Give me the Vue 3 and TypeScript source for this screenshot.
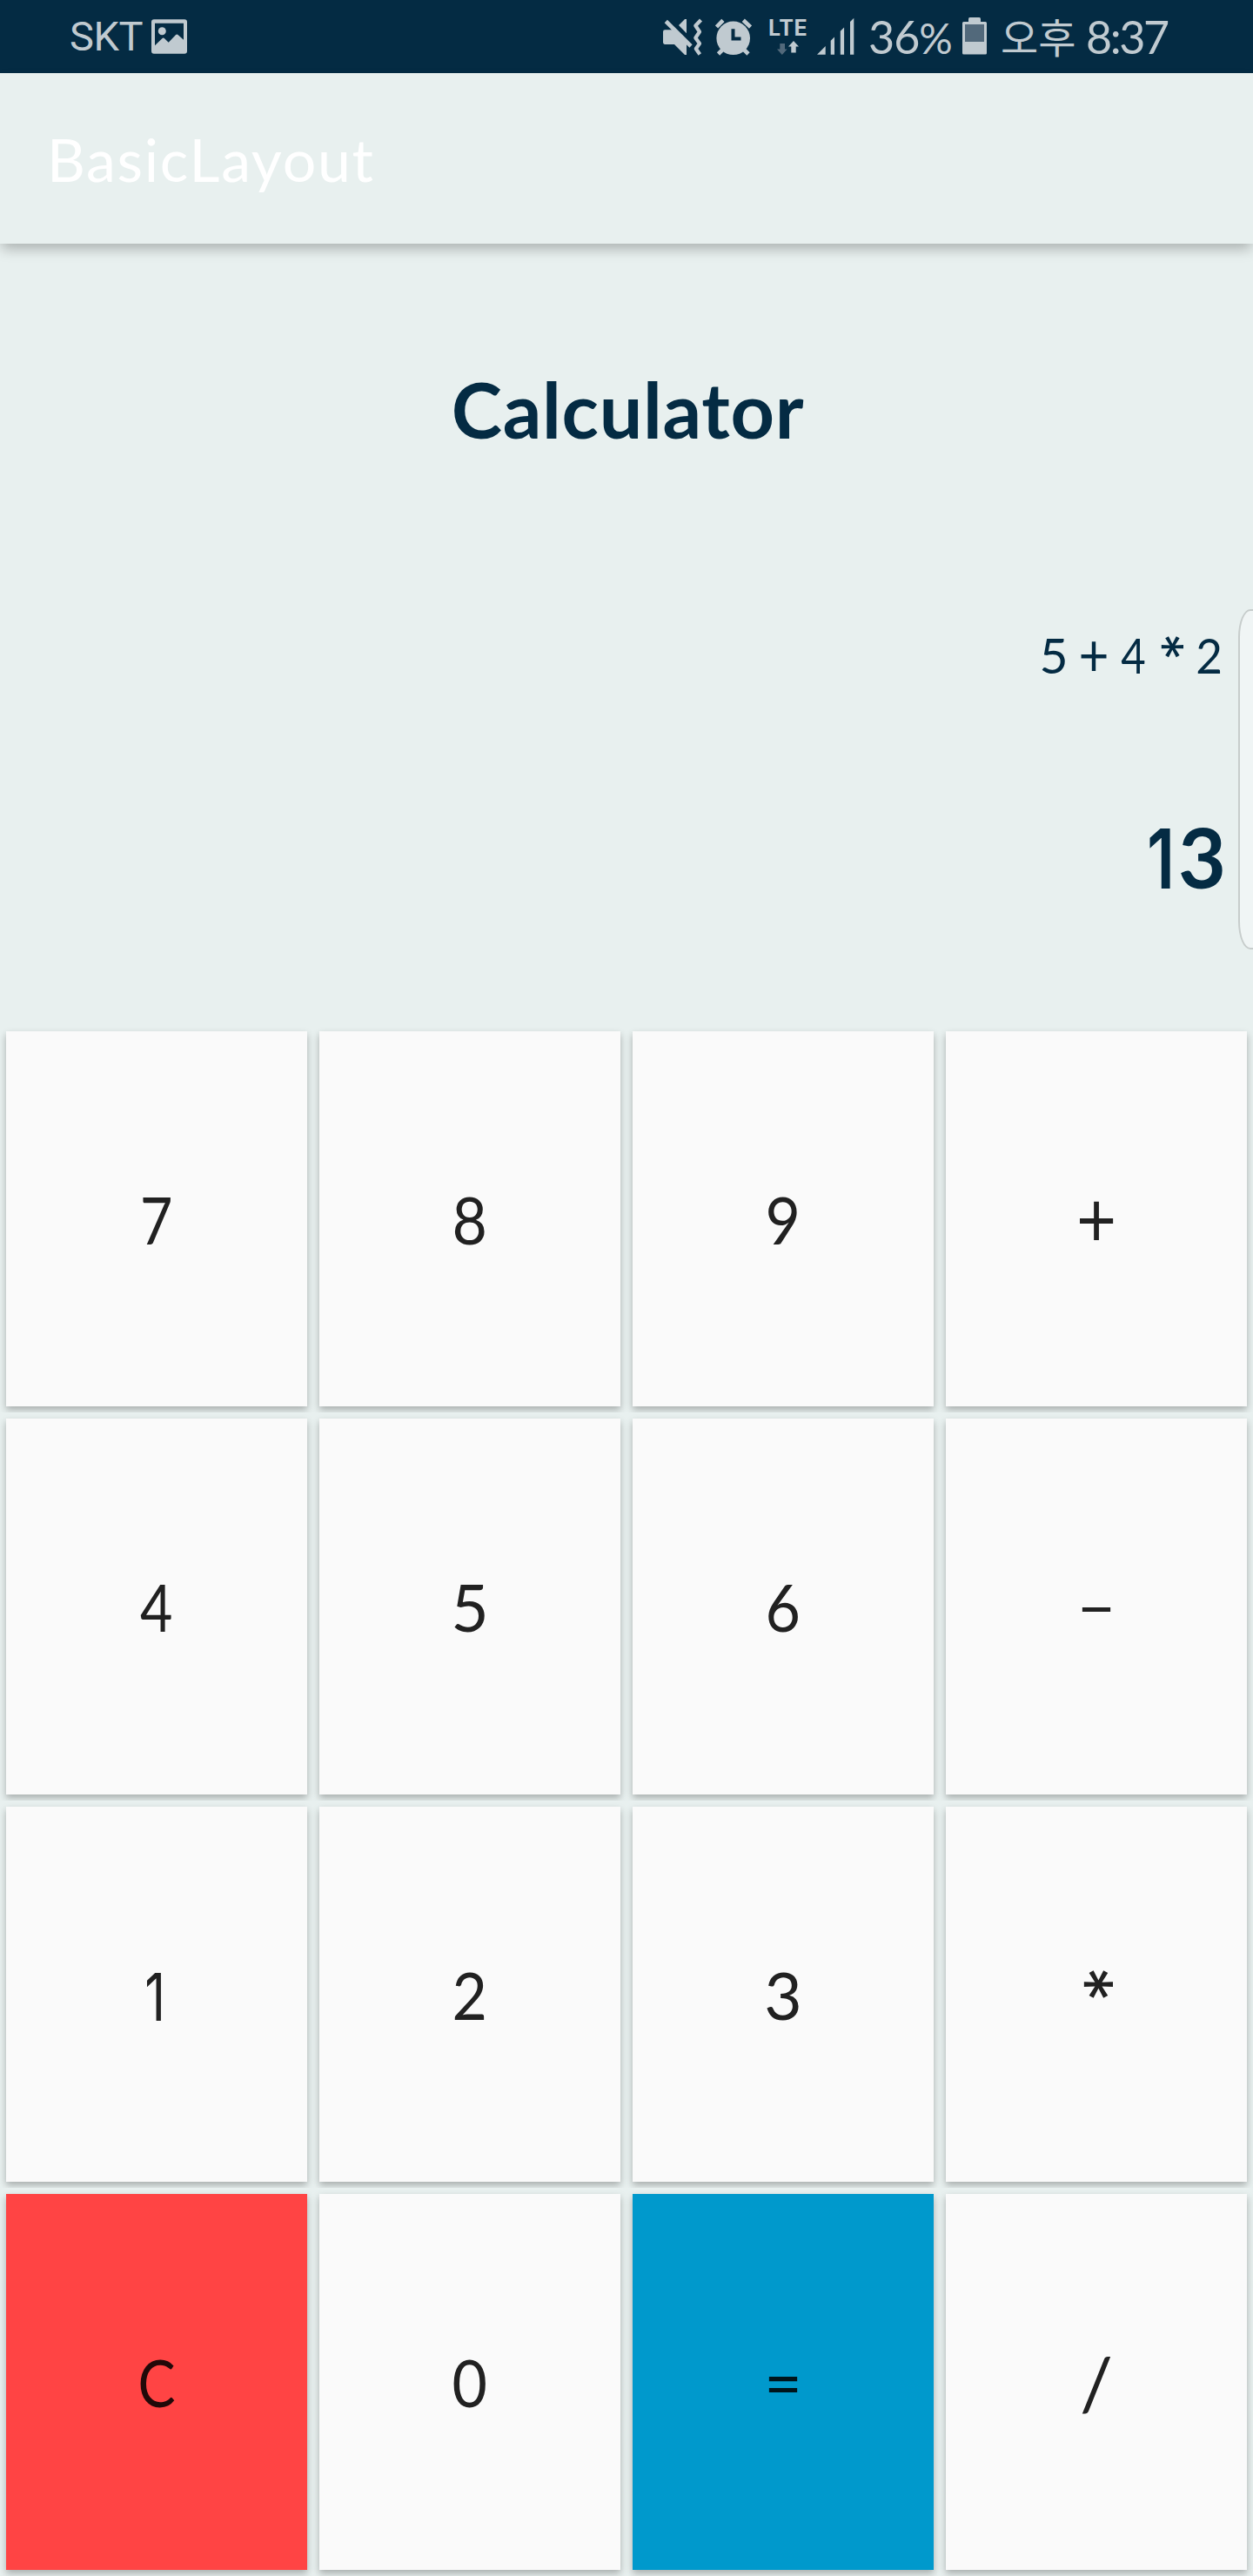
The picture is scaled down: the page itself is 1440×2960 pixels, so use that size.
<script setup lang="ts">
interface Key {
  label: string
  shape?: 'narrow' | 'slim' | 'one' | 'plus' | 'star' | 'slash'
  tone?: 'clear' | 'equals'
}

const rows: Key[][] = [
  [{ label: '7', shape: 'narrow' }, { label: '8', shape: 'slim' }, { label: '9', shape: 'slim' }, { label: '+', shape: 'plus' }],
  [{ label: '4', shape: 'narrow' }, { label: '5' }, { label: '6', shape: 'slim' }, { label: '−' }],
  [{ label: '1', shape: 'one' }, { label: '2', shape: 'slim' }, { label: '3' }, { label: '*', shape: 'star' }],
  [{ label: 'C', shape: 'narrow', tone: 'clear' }, { label: '0', shape: 'slim' }, { label: '=', tone: 'equals' }, { label: '/', shape: 'slash' }],
]

const expression: Key[] = [
  { label: '5' },
  { label: '+', shape: 'plus' },
  { label: '4', shape: 'narrow' },
  { label: '*', shape: 'star' },
  { label: '2', shape: 'slim' },
]
</script>

<template>
  <div class="screen">
    <header class="status">
      <span class="carrier">SKT</span>
      <svg class="picture" width="41" height="84" viewBox="174 0 41 84">
        <path fill-rule="evenodd" d="M177 22.3H212a3 3 0 0 1 3 3V58.7a3 3 0 0 1-3 3H177a3 3 0 0 1-3-3V25.3a3 3 0 0 1 3-3ZM178 26.7V52.3L186.3 44.2Q187.7 43 189.1 44.2L193.7 48.7L201.8 40.2Q203.3 38.8 204.8 40.2L211 45.7V26.7Z" />
        <circle cx="186.3" cy="35.7" r="4.5" />
      </svg>

      <div class="tray">
        <svg class="mute" width="46" height="84" viewBox="762 0 46 84">
          <path d="M789 22V38.2L780 29L787 22ZM762 36.5Q762 34.3 764.2 34.3H774L789 49V63H787L775 51H764.2Q762 51 762 48.8Z" />
          <path class="line" stroke-width="4.6" d="M765.3 24.5L794 53" />
          <path class="line" stroke-width="4.2" stroke-linejoin="round" d="M805.5 23L799.3 29.5L804 36.5L799.3 43.5L804 50L799.8 56L804.3 62.5" />
        </svg>
        <svg class="alarm" width="42" height="84" viewBox="821.5 0 42 84">
          <circle cx="842.2" cy="43.8" r="19.3" />
          <path class="line" stroke-width="4.6" d="M823 31L830.4 23.3M853.8 23.3L862 31M825 62L830.5 56.5M854 56.5L859.5 62" />
          <path class="hand" d="M842 33.3V44.4H851" />
        </svg>
        <div class="network">
          <span class="lte">LTE</span>
          <svg class="arrows" width="43" height="17" viewBox="884 47 43 17">
            <path class="idle" d="M896.3 50H902V56.5H904.6L898.8 63L893 56.5H896.3Z" />
            <path d="M912 47L918 53.5H914.7V60.4H909.3V53.5H906Z" />
          </svg>
        </div>
        <svg class="signal" width="43" height="84" viewBox="939 0 43 84">
          <path d="M939 62.7L948.7 53V62.7ZM954.7 62.7V46.8L959 42.6V62.7ZM965.8 62.7V35.7L970.1 31.5V62.7ZM977 62.7V24.9L981.3 20.7V62.7Z" />
        </svg>
        <span class="percent">36<small>%</small></span>
        <svg class="battery" width="28" height="84" viewBox="1106 0 28 84">
          <path d="M1114.5 20H1125.5Q1127 20 1127 22V25H1132.5Q1134 25 1134 26.5V61Q1134 62.5 1132.5 62.5H1107.5Q1106 62.5 1106 61V26.5Q1106 25 1107.5 25H1113V22Q1113 20 1114.5 20Z" />
          <path class="idle" d="M1109 28H1131V48H1109Z" />
        </svg>
        <span class="meridiem">오후</span>
        <span class="clock">8:37</span>
      </div>
    </header>

    <div class="appbar"><span>BasicLayout</span></div>

    <main class="display">
      <h1>Calculator</h1>
      <div class="expression">
        <span v-for="(part, i) in expression" :key="i" class="part" :class="part.shape"><b>{{ part.label }}</b></span>
      </div>
      <div class="result"><span class="lead">1</span>3</div>
      <div class="edge"></div>
    </main>

    <section class="pad">
      <div v-for="(row, r) in rows" :key="r" class="row">
        <button v-for="key in row" :key="key.label" type="button" :class="[key.tone, key.shape]">
          <b>{{ key.label }}</b>
        </button>
      </div>
    </section>
  </div>
</template>

<style>
body {
  margin: 0;
  background: #e8f0ef;
}
</style>

<style scoped>
.screen {
  display: flex;
  flex-direction: column;
  width: 1440px;
  height: 2960px;
  overflow: hidden;
  background: #e8f0ef;
  color: #042b43;
  font-family: Lato, "Noto Sans CJK KR", sans-serif;
}

svg {
  display: block;
  flex: none;
  fill: #c0cad0;
}

.status {
  display: flex;
  flex: none;
  height: 84px;
  padding-left: 80px;
  background: #042b43;
  color: #c0cad0;
  line-height: 84px;
  white-space: nowrap;
}

.carrier {
  width: 94px;
  font-family: Roboto, sans-serif;
  font-size: 47px;
  letter-spacing: -0.4px;
}

.tray {
  display: flex;
  margin-left: 547px;
}

.line {
  fill: none;
  stroke: #c0cad0;
}

.hand {
  fill: none;
  stroke: #042b43;
  stroke-width: 4;
}

.idle {
  fill: #52697b;
}

.alarm {
  margin-left: 13.5px;
}

.network {
  display: flex;
  flex-direction: column;
  width: 43px;
  margin-left: 20.5px;
  padding-top: 20px;
}

.lte {
  height: 27px;
  margin-left: -1px;
  font: 700 25px/25px Inter, sans-serif;
  letter-spacing: 0.5px;
}

.signal {
  margin-left: 12px;
}

.percent {
  width: 108px;
  margin-left: 16px;
  font-size: 52px;
  letter-spacing: -1px;
}

.percent small {
  font-size: 48px;
}

.meridiem {
  width: 98px;
  margin-left: 16px;
  font-family: "Noto Sans CJK KR", sans-serif;
  font-size: 47px;
  line-height: 82px;
}

.clock {
  font-size: 52px;
  letter-spacing: -2.4px;
}

.appbar {
  position: relative;
  flex: none;
  height: 116px;
  padding: 40px 0 40px 54px;
  background: #e8f0ef;
  box-shadow: 0 8px 14px -2px rgba(0, 0, 0, 0.26);
  color: #fff;
  font-size: 68px;
  letter-spacing: 1.7px;
  line-height: 117px;
}

.display {
  position: relative;
  flex: none;
  box-sizing: border-box;
  height: 898px;
  padding: 137px 27px 0 0;
}

h1 {
  margin: 0 -27px 194px 0;
  padding-left: 3px;
  font-size: 88px;
  font-weight: 700;
  letter-spacing: 0.7px;
  line-height: 106px;
  text-align: center;
}

b {
  display: inline-block;
  font-weight: inherit;
}

.expression {
  display: flex;
  justify-content: flex-end;
  height: 70px;
  font-size: 57px;
  line-height: 70px;
}

.part {
  width: 46px;
  text-align: center;
}

.part.star {
  width: 41px;
}

.narrow b {
  transform: scaleX(0.86);
}

.slim b {
  transform: scaleX(0.93);
}

.one b {
  font-family: Inter, sans-serif;
  transform: translate(-2px, 3px) scaleX(0.78);
}

.plus b {
  font-size: 1.06em;
  transform: translateY(-0.02em) scaleY(1.12);
}

.star b {
  font-family: Inter, sans-serif;
  font-size: 1.08em;
  line-height: 1;
  transform: translate(-0.15em, -0.14em) rotate(90deg);
}

.slash b {
  font-size: 1.12em;
}

.result {
  margin-top: 140px;
  padding-right: 4px;
  font-size: 95px;
  font-weight: 700;
  line-height: 114px;
  text-align: right;
}

.lead {
  display: inline-block;
  font-family: Inter, sans-serif;
  font-weight: 600;
  line-height: 1;
  transform: scaleX(0.8);
}

.edge {
  position: absolute;
  top: 420px;
  left: 1423px;
  box-sizing: border-box;
  width: 40px;
  height: 391px;
  border: 2px solid #c7cdcc;
  border-radius: 14px / 32px;
  background: #f0f5f5;
}

.pad {
  display: grid;
  flex: none;
  grid-template-rows: 445px 446px 445px 446px;
}

.row {
  display: grid;
  grid-template-columns: repeat(4, 346px);
  gap: 14px;
  padding: 7px;
  overflow: hidden;
}

button {
  display: flex;
  align-items: center;
  justify-content: center;
  padding: 0;
  border: 0;
  background: #fafafa;
  box-shadow: 0 4px 8px rgba(0, 0, 0, 0.28);
  color: #212121;
  font-family: inherit;
  font-size: 75px;
  line-height: 90px;
}

.clear {
  background: #ff4444;
  color: #210909;
}

.equals {
  background: #0099cc;
  color: #00141b;
}
</style>
